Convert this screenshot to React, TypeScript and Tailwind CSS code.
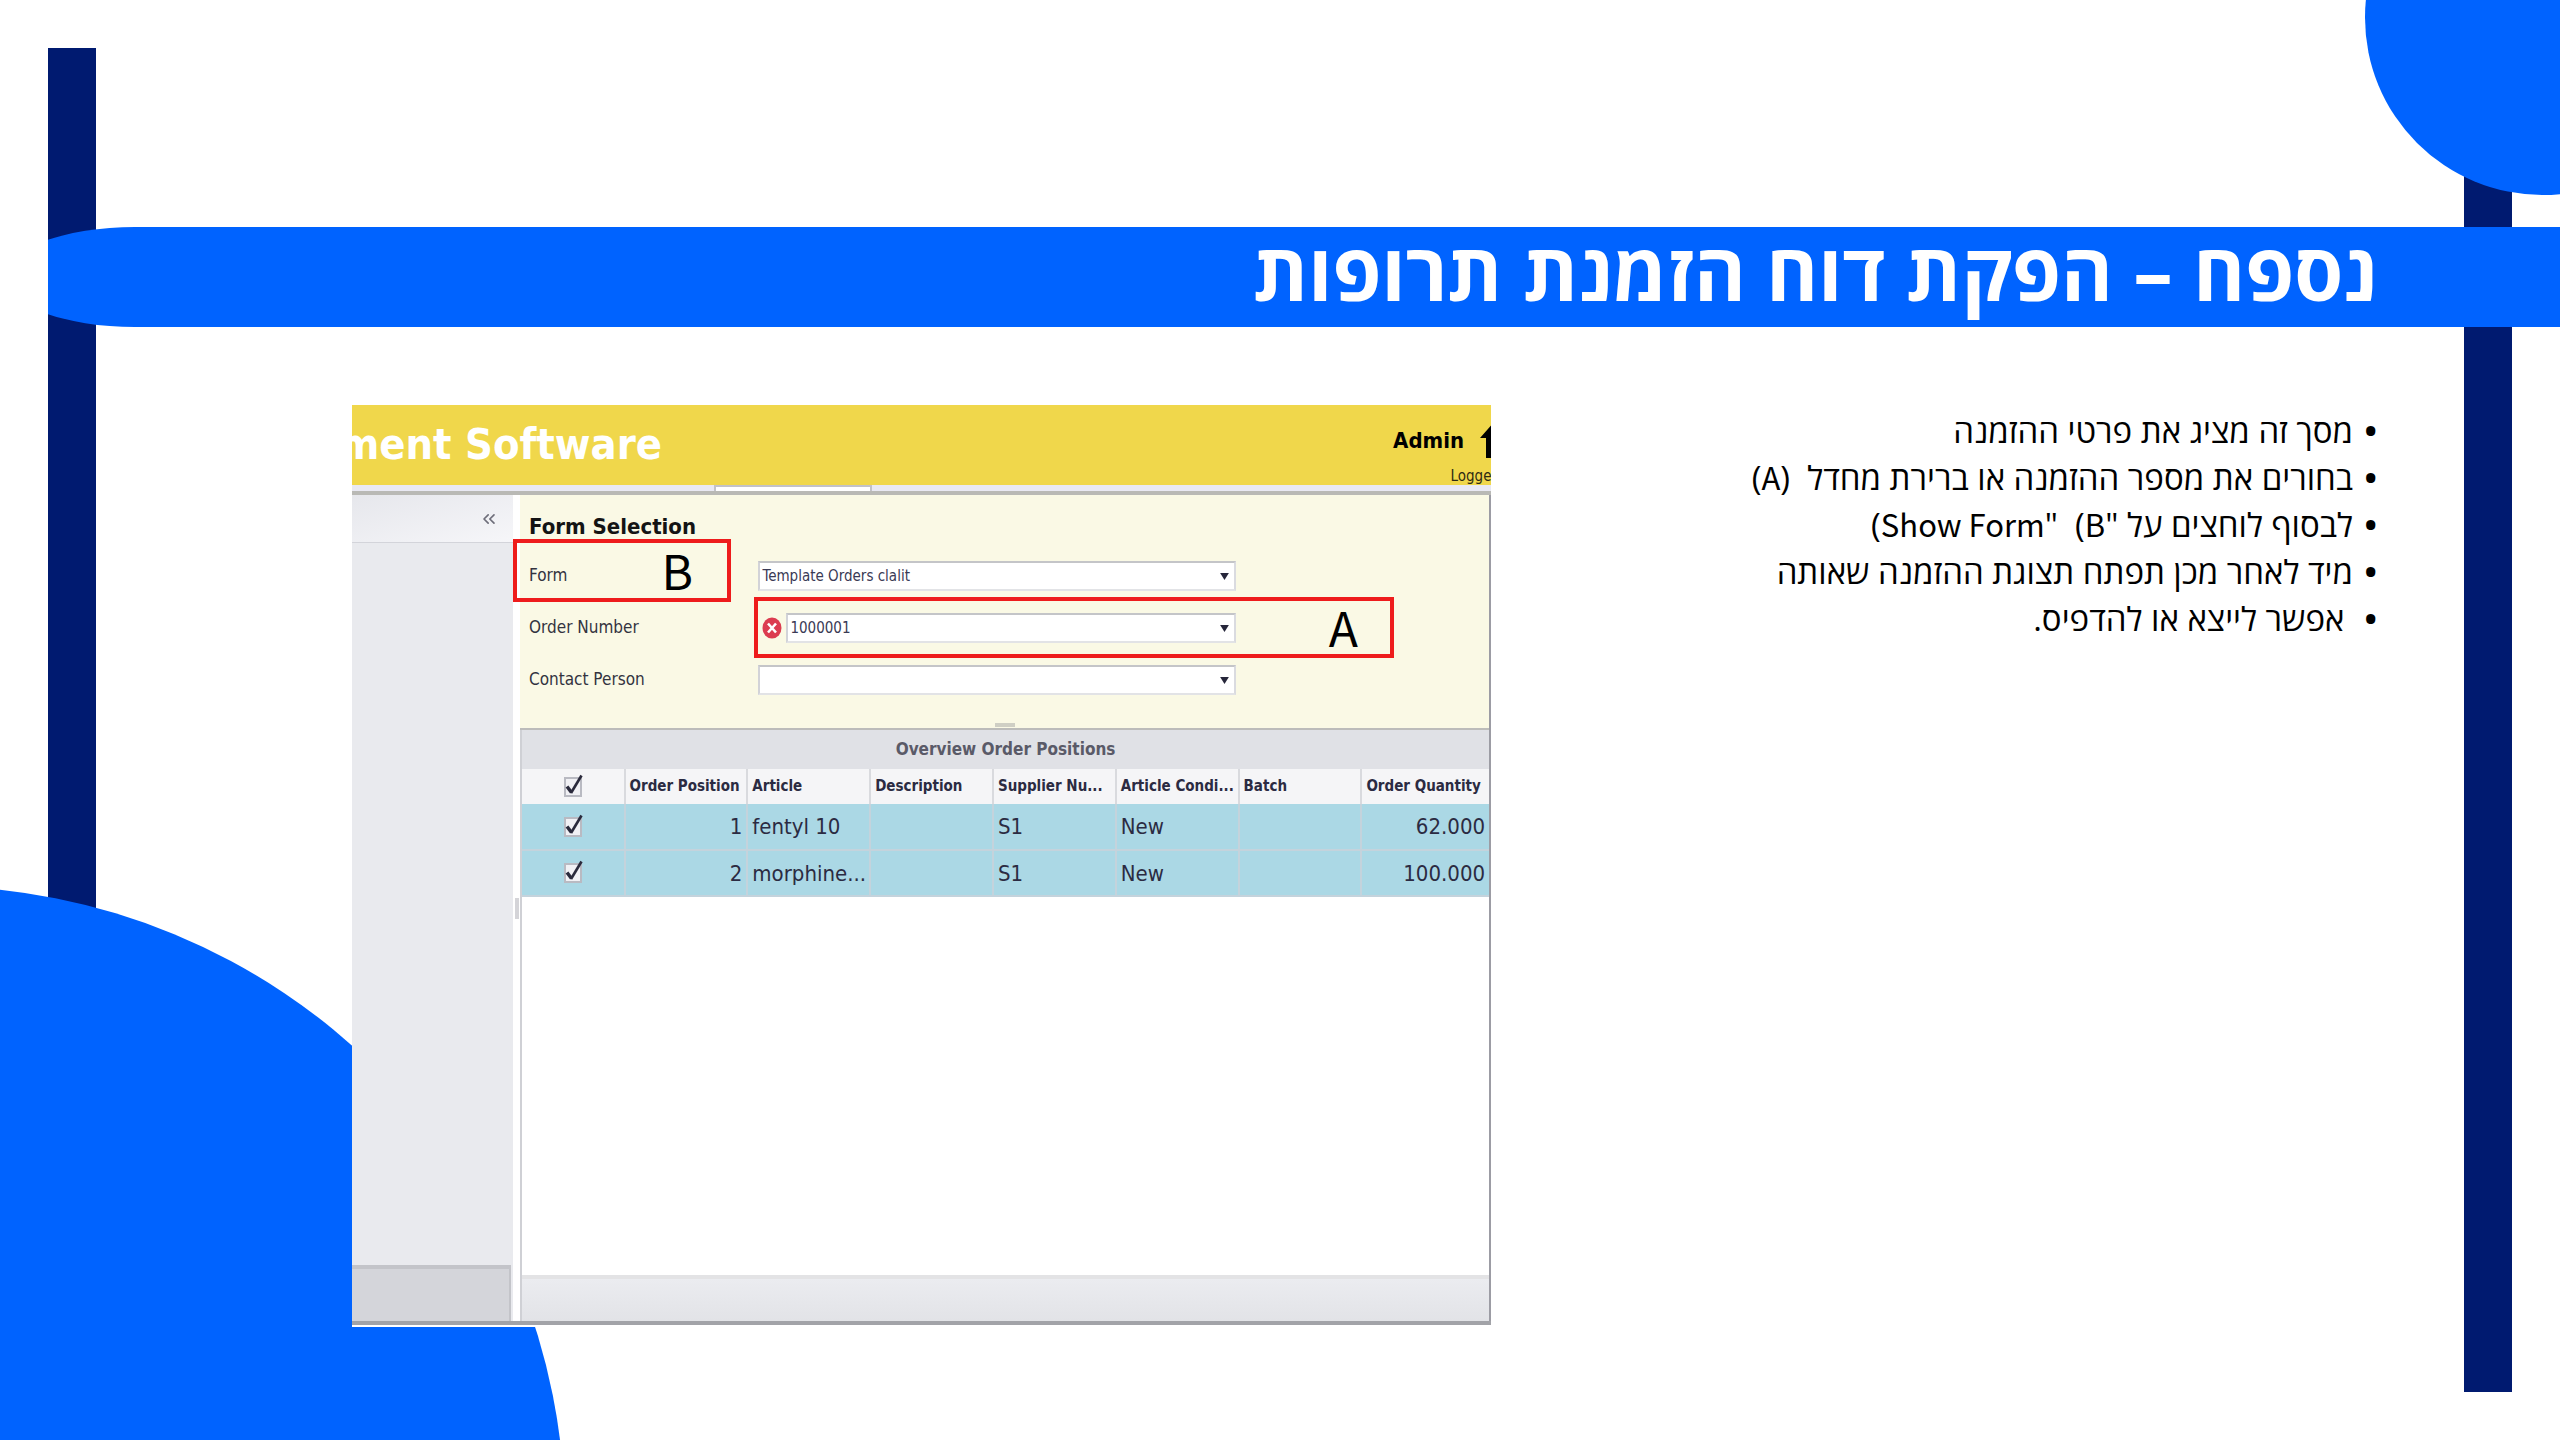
import { useState, type ReactNode } from 'react'
import { ChevronsLeft } from 'lucide-react'

const rows = [
  { pos: 1, article: 'fentyl 10', supplier: 'S1', condition: 'New', quantity: '62.000' },
  { pos: 2, article: 'morphine...', supplier: 'S1', condition: 'New', quantity: '100.000' },
]

function Latin({ children }: { children: ReactNode }) {
  return <bdi className="font-['Noto_Sans_CJK_JP','Open_Sans',sans-serif] text-[31px] leading-none">{children}</bdi>
}

function Backdrop() {
  return (
    <div aria-hidden className="pointer-events-none absolute inset-0 overflow-hidden">
      <div className="absolute top-12 bottom-12 left-12 w-12 bg-[#001a70]" />
      <div className="absolute top-12 right-12 bottom-12 w-12 bg-[#001a70]" />
      <div className="absolute -top-[160px] -right-[160px] size-[355px] rounded-full bg-[#0063ff]" />
      <div className="absolute -bottom-[712px] -left-[701px] size-[1266px] rounded-full bg-[#0063ff]" />
    </div>
  )
}

function Tick({ label }: { label: string }) {
  const [on, setOn] = useState(true)
  return (
    <label className="relative mx-auto block h-5 w-[18px]">
      <input
        type="checkbox"
        aria-label={label}
        checked={on}
        onChange={() => setOn(!on)}
        className="block h-5 w-[18px] appearance-none border-2 border-[#b9bac2] bg-[#f1f1f5]"
      />
      {on && (
        <svg viewBox="0 0 20 24" className="pointer-events-none absolute -top-1 left-0 h-6 w-5" fill="none" stroke="#2a2a3c">
          <path d="M3 13.5 L7.5 19.5" strokeWidth="3.4" />
          <path d="M7 20 L17.5 2.5" strokeWidth="2.6" />
        </svg>
      )}
    </label>
  )
}

function Field({ id, label, value, error, children }: {
  id: string
  label: string
  value: string
  error?: boolean
  children?: ReactNode
}) {
  return (
    <div className="relative flex h-[52px] items-center">
      <label htmlFor={id} className="w-[24%] text-[17px] text-[#33333f]">{label}</label>
      <div className="flex w-1/2 items-center">
        {error && (
          <svg viewBox="0 0 20 22" className="mx-1 h-[22px] w-5 shrink-0">
            <ellipse cx="10" cy="11" rx="9.5" ry="10.5" fill="#dc3c50" />
            <path d="M6 6.5 L14 15.5 M14 6.5 L6 15.5" stroke="#fff" strokeWidth="2.6" />
          </svg>
        )}
        <div className="relative flex-1">
          <select
            id={id}
            defaultValue={value}
            className="block h-[30px] w-full appearance-none rounded-none border-2 border-t-[#c4c5c8] border-r-[#dadbe0] border-b-[#e2e3e6] border-l-[#d2d3d8] bg-white px-0.5 text-[15px] text-[#3a3a55]"
          >
            <option value={value}>{value}</option>
          </select>
          <svg viewBox="0 0 10 8" className="pointer-events-none absolute top-3 right-[7px] h-[7px] w-[9px]">
            <path d="M0 0 H10 L5 8 Z" fill="#26263a" />
          </svg>
        </div>
      </div>
      {children}
    </div>
  )
}

function SoftwareHeader() {
  return (
    <header className="flex h-20 items-start justify-between bg-[#f0d74b]">
      <div className="flex h-[78px] w-[310px] shrink-0 items-center justify-end overflow-hidden">
        <span className="text-[43px] font-bold whitespace-nowrap text-white">ment Software</span>
      </div>
      <div className="-mr-[17px] flex flex-col items-end text-black">
        <div className="flex h-[62px] items-center gap-4 pt-2">
          <span className="text-[22px] font-bold">Admin</span>
          <svg viewBox="0 0 28 36" className="h-9 w-7">
            <path d="M14 0 L28 16 H20 V36 H6 V16 H0 Z" fill="#000" />
          </svg>
        </div>
        <span className="pr-2 text-[15px] leading-[18px] text-[#2d2a12]">Logged</span>
      </div>
    </header>
  )
}

function Sidebar() {
  return (
    <aside className="flex w-[161px] shrink-0 flex-col bg-[#e9eaee]">
      <div className="flex h-12 items-center justify-end border-b border-[#d3d4da] bg-linear-to-br from-[#e6e7ec] to-[#f6f6f9] pr-3.5">
        <button type="button" aria-label="Collapse">
          <ChevronsLeft className="size-5 text-[#6e6e7a]" strokeWidth={2} />
        </button>
      </div>
      <div className="flex-1" />
      <div className="mr-0.5 h-14 border-t-4 border-r-2 border-[#c3c4c9] bg-[#d4d5da]" />
    </aside>
  )
}

const th = 'overflow-hidden border-r-2 border-[#d9dade] px-1 text-[15px] font-bold whitespace-nowrap'
const td = 'border-r-2 border-b-2 border-[#c4d3dc] px-1'

function OrderTable() {
  return (
    <table className="w-full table-fixed border-collapse text-left text-[#2b2b42]">
      <caption className="bg-[#e0e1e6] text-[17px] leading-[39px] font-bold text-[#5a5a68]">Overview Order Positions</caption>
      <colgroup>
        <col className="w-[10.6%]" />
        <col className="w-[12.7%]" />
        <col className="w-[12.7%]" />
        <col className="w-[12.7%]" />
        <col className="w-[12.7%]" />
        <col className="w-[12.7%]" />
        <col className="w-[12.7%]" />
        <col />
      </colgroup>
      <thead>
        <tr className="h-[35px] bg-[#f5f5f7]">
          <th className={th}><Tick label="Select all" /></th>
          <th className={th}>Order Position</th>
          <th className={th}>Article</th>
          <th className={th}>Description</th>
          <th className={th}>Supplier Nu...</th>
          <th className={th}>Article Condi...</th>
          <th className={th}>Batch</th>
          <th className="px-1 text-[15px] font-bold whitespace-nowrap">Order Quantity</th>
        </tr>
      </thead>
      <tbody>
        {rows.map((r) => (
          <tr key={r.pos} className="h-[46px] bg-[#abd8e5] text-[22px]">
            <td className={td}><Tick label={`Select position ${r.pos}`} /></td>
            <td className={`${td} text-right`}>{r.pos}</td>
            <td className={td}>{r.article}</td>
            <td className={td} />
            <td className={td}>{r.supplier}</td>
            <td className={td}>{r.condition}</td>
            <td className={td} />
            <td className="border-b-2 border-[#c4d3dc] px-1 text-right">{r.quantity}</td>
          </tr>
        ))}
      </tbody>
    </table>
  )
}

function OrderScreen() {
  return (
    <section dir="ltr" className="overflow-hidden bg-white pb-0.5 font-['DejaVu_Sans_Condensed','DejaVu_Sans',sans-serif]">
      <SoftwareHeader />
      <div className="h-1.5 bg-[#e9e9f3] pl-[362px]">
        <div className="h-full w-[158px] border-x-2 border-t-2 border-[#c2c2c8] bg-white" />
      </div>
      <div className="flex border-y-4 border-t-[#b9b9b5] border-b-[#a2a3a8]">
        <Sidebar />
        <div className="flex w-[7px] shrink-0 items-center bg-white">
          <div className="mx-auto h-[21px] w-1 bg-[#d4d4d8]" />
        </div>
        <div className="min-w-0 flex-1 border-r-2 border-[#9c9ca4]">
          <form className="relative border-b-2 border-[#bcbcba] bg-[#faf9e5] pt-4 pr-1 pb-[22px] pl-[9px]">
            <h2 className="mb-[7px] h-8 text-[22px] leading-8 font-bold text-[#141414]">Form Selection</h2>
            <Field id="form" label="Form" value="Template Orders clalit">
              <div className="absolute -top-[11px] -left-4 flex h-[63px] w-[218px] items-center justify-end border-4 border-[#ee1c1c] pr-[34px] pb-1">
                <span className="font-['Noto_Sans_CJK_JP',sans-serif] text-5xl leading-none text-black">B</span>
              </div>
            </Field>
            <Field id="order" label="Order Number" value="1000001" error>
              <div className="pointer-events-none absolute -top-[5px] left-[225px] flex h-[61px] w-[640px] items-center justify-end border-4 border-[#ee1c1c] pr-8 pb-1">
                <span className="font-['Noto_Sans_CJK_JP',sans-serif] text-5xl leading-none text-black">A</span>
              </div>
            </Field>
            <Field id="contact" label="Contact Person" value="" />
            <div className="absolute inset-x-0 bottom-px mx-auto h-1 w-5 bg-[#cfcfc4]" />
          </form>
          <div className="border-l-2 border-[#cfd0d5]">
            <OrderTable />
            <div className="h-[378px] bg-white" />
            <div className="h-[46px] border-t-4 border-[#e3e3e5] bg-linear-to-b from-[#ebecf0] to-[#e2e3e7]" />
          </div>
        </div>
      </div>
    </section>
  )
}

export default function App() {
  return (
    <div
      dir="rtl"
      lang="he"
      className="relative min-h-screen overflow-hidden bg-white pt-[227px] font-['Open_Sans','Liberation_Sans',sans-serif] text-black"
    >
      <Backdrop />
      <div className="relative ml-12 overflow-hidden">
        <div className="-ml-[43px] flex h-[100px] items-center rounded-l-[130px_50px] bg-[#0063ff] pr-[183px] pb-3">
          <h1 className="text-[79px] leading-[88px] font-bold whitespace-nowrap text-white">נספח – הפקת דוח הזמנת תרופות</h1>
        </div>
      </div>
      <main className="relative grid grid-cols-[7fr_9fr] items-start pt-[78px] pr-[183px] pl-[352px]">
        <ul className="list-none pt-0.5 text-[33px] leading-[47px]">
          {[
            <>מסך זה מציג את פרטי ההזמנה</>,
            <>בחורים את מספר ההזמנה או ברירת מחדל&nbsp; (<Latin>A</Latin>)</>,
            <>לבסוף לוחצים על "<Latin>B</Latin>)&nbsp; "<Latin>Show Form</Latin>)</>,
            <>מיד לאחר מכן תפתח תצוגת ההזמנה שאותה</>,
            <>&nbsp;אפשר לייצא או להדפיס.</>,
          ].map((line, i) => (
            <li key={i} className="flex whitespace-nowrap">
              <span aria-hidden className="w-6 shrink-0 font-bold">•</span>
              <span>{line}</span>
            </li>
          ))}
        </ul>
        <OrderScreen />
      </main>
    </div>
  )
}
